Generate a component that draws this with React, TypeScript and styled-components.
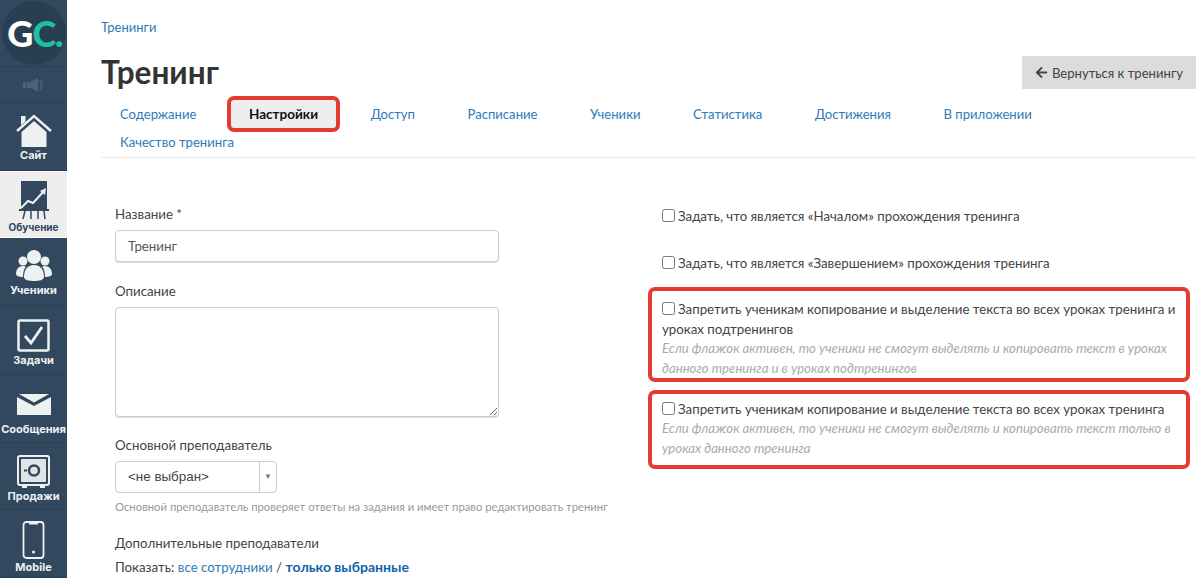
import React from "react";
import styled, { createGlobalStyle } from "styled-components";
import { FaArrowLeft } from "react-icons/fa";

const GlobalStyle = createGlobalStyle`
  html, body {
    margin: 0;
    padding: 0;
    height: 100%;
    overflow: hidden;
    background: #fff;
    font-family: Lato, "Open Sans", sans-serif;
    color: #333;
  }
`;

const Page = styled.div`
  display: flex;
  width: 1200px;
  height: 578px;
  overflow: hidden;
`;

const Sidebar = styled.nav`
  flex: 0 0 67px;
  height: 578px;
  background: #32485e;
  display: flex;
  flex-direction: column;
  overflow: hidden;
`;

const LogoCell = styled.div`
  height: 66px;
  flex: none;
  display: flex;
  align-items: center;
  justify-content: center;
  border-bottom: 1px solid #2b3f53;
`;

const LogoCircle = styled.div`
  box-sizing: border-box;
  width: 64px;
  height: 64px;
  padding-left: 3px;
  border-radius: 50%;
  background: #2a3e52;
  display: flex;
  align-items: center;
  justify-content: center;
  font: 900 36px/1 Lato, sans-serif;
  letter-spacing: -1px;
  color: #fff;
`;

const LogoAccent = styled.span`
  color: #1dbfa6;
`;

const SoundCell = styled.div`
  height: 35px;
  flex: none;
  display: flex;
  align-items: center;
  justify-content: center;
  border-bottom: 1px solid #2b3f53;
`;

const NavItem = styled.a<{ $active?: boolean; $h: number; $pad: number; $gap: number }>`
  height: ${(p) => p.$h}px;
  flex: none;
  box-sizing: border-box;
  display: flex;
  flex-direction: column;
  align-items: center;
  justify-content: flex-end;
  padding-bottom: ${(p) => p.$pad}px;
  gap: ${(p) => p.$gap}px;
  background: ${(p) => (p.$active ? "#eeeeee" : "transparent")};
  color: ${(p) => (p.$active ? "#32485e" : "#eef1f2")};
  border-bottom: 1px solid ${(p) => (p.$active ? "#fff" : "#2b3f53")};
  ${(p) => (p.$active ? "border-top: 1px solid #fff;" : "")}
  font: 700 ${(p) => (p.$active ? 10 : 11)}px/14px Inter, "Liberation Sans", sans-serif;
  white-space: nowrap;
`;

const Main = styled.main`
  flex: 1;
  min-width: 0;
  padding: 0 4px 0 34px;
`;

const TitleBlock = styled.header`
  display: flex;
  justify-content: space-between;
  align-items: flex-end;
  padding-top: 20px;
  height: 69px;
`;

const Crumb = styled.a`
  display: block;
  font-size: 13px;
  line-height: 15px;
  color: #2e7ab8;
`;

const Title = styled.h1`
  margin: 20px 0 0;
  font-size: 31.500px;
  line-height: 34px;
  font-weight: 700;
  color: #333;
`;

const BackButton = styled.a`
  width: 174px;
  height: 33px;
  background: #dcdcdc;
  display: flex;
  align-items: center;
  justify-content: center;
  gap: 4px;
  font-size: 13.100px;
  color: #444;
`;

const Tabs = styled.ul`
  list-style: none;
  margin: 11px 0 0;
  padding: 0 0 1px;
  display: flex;
  flex-wrap: wrap;
  column-gap: 14.600px;
  border-bottom: 1px solid #eaeaea;
`;

const Tab = styled.li<{ $active?: boolean }>`
  box-sizing: border-box;
  height: 28px;
  display: flex;
  align-items: center;
  padding: 0 19px;
  font-size: 13.100px;
  color: #2e7ab8;
  white-space: nowrap;
  ${(p) =>
    p.$active
      ? `
    padding: 0 18px;
    margin: -4px -3px;
    height: 36px;
    align-self: flex-start;
    background: #eee;
    border: 4px solid #e53a30;
    border-radius: 7px;
    color: #111;
    font-size: 13.500px;
    font-weight: 700;
  `
      : ""}
`;

const Columns = styled.section`
  display: grid;
  grid-template-columns: 384px 542px;
  column-gap: 149px;
  padding: 47px 0 0 14px;
`;

const Column = styled.div`
  display: flex;
  flex-direction: column;
`;

const Label = styled.label`
  display: block;
  font-size: 13.300px;
  line-height: 18px;
  color: #444;
  margin-bottom: 7px;
`;

const TextInput = styled.input`
  box-sizing: border-box;
  display: block;
  width: 384px;
  height: 32px;
  padding: 0 12px;
  border: 1px solid #ccc;
  border-radius: 4px;
  box-shadow: 0 1px 1px #ddd;
  font: 13.300px Lato, sans-serif;
  color: #555;
  margin-bottom: 20px;
`;

const TextArea = styled.textarea`
  box-sizing: border-box;
  display: block;
  width: 384px;
  height: 110px;
  border: 1px solid #ccc;
  border-radius: 4px;
  box-shadow: 0 1px 1px #ddd;
  margin-bottom: 19px;
`;

const SelectBox = styled.div`
  box-sizing: border-box;
  width: 162px;
  height: 32px;
  display: flex;
  border: 1px solid #ccc;
  border-radius: 4px;
`;

const SelectValue = styled.span`
  flex: 1;
  padding-left: 12px;
  font: 13.400px/30px "Liberation Sans", sans-serif;
  color: #444;
`;

const SelectArrow = styled.span`
  flex: 0 0 17px;
  display: flex;
  justify-content: center;
  padding-top: 10px;
  box-sizing: border-box;
  border-left: 1px solid #ccc;
  font-size: 8px;
  line-height: 8px;
  color: #777;
`;

const Hint = styled.p`
  margin: 6px 0 0;
  width: 520px;
  font-size: 11.300px;
  line-height: 15px;
  color: #999;
`;

const ExtraLabel = styled(Label)`
  margin: 20px 0 6px;
`;

const ShowRow = styled.div`
  font-size: 13.300px;
  line-height: 18px;
  color: #444;
`;

const Link = styled.a<{ $strong?: boolean }>`
  color: ${(p) => (p.$strong ? "#0f62a8" : "#2e7ab8")};
  font-weight: ${(p) => (p.$strong ? 700 : 400)};
  font-size: ${(p) => (p.$strong ? "14px" : "inherit")};
`;

const CheckRow = styled.div<{ $gap: number }>`
  padding-left: 14px;
  margin-bottom: ${(p) => p.$gap}px;
  font-size: 13.300px;
  line-height: 22px;
  color: #444;
`;

const Highlight = styled.div<{ $top: number; $bottom: number }>`
  box-sizing: border-box;
  border: 4px solid #e53a30;
  border-radius: 7px;
  padding: ${(p) => p.$top}px 8px ${(p) => p.$bottom}px 10px;
  margin-bottom: 8px;
  font-size: 13.300px;
  line-height: 20px;
  color: #444;
`;

const Box = styled.input.attrs({ type: "checkbox" })`
  width: 13px;
  height: 13px;
  margin: 0 3px 0 0;
  vertical-align: -1px;
`;

const Note = styled.div`
  font-style: italic;
  color: #aaa;
  font-size: 13.200px;
  line-height: 19.500px;
`;

const HouseIcon = () => (
  <svg width="36" height="33" viewBox="0 0 36 33">
    <path d="M5.500 18 18 7l12.500 11v15h-25z" fill="#eef1f2" />
    <path d="M5 2h4.500v5.500L5 11.500z" fill="#eef1f2" />
    <path d="M1 17 18 2l17 15" fill="none" stroke="#eef1f2" strokeWidth="2.400" />
  </svg>
);

const ChartIcon = () => (
  <svg width="30" height="38" viewBox="0 0 30 38">
    <rect x="2" y="0" width="26" height="28" fill="#32485e" />
    <path d="M2 27 9 20l5 2L25 10" fill="none" stroke="#eee" strokeWidth="2" />
    <path d="M27 7l-1 7-5-4z" fill="#eee" />
    <rect x="0" y="28" width="30" height="2" fill="#32485e" />
    <path d="M6 30 4 38M12 30v8M19 30v8M25 30l1 8" stroke="#32485e" strokeWidth="1.500" />
  </svg>
);

const PeopleIcon = () => (
  <svg width="36" height="32" viewBox="0 0 36 32">
    <g fill="#eef1f2">
      <circle cx="7" cy="11" r="4.500" />
      <circle cx="29" cy="11" r="4.500" />
      <path d="M0 24c0-5 3-8 7-8 1 0 2 .3 3 .8C8 19 7 22 7 27 3 27 0 26 0 24zM36 24c0-5-3-8-7-8-1 0-2 .3-3 .8 2 2.200 3 5.200 3 10.200 4 0 7-1 7-3z" />
      <circle cx="18" cy="7" r="7" />
      <path d="M8 27c0-8 4-12 10-12s10 4 10 12c0 3-5 4-10 4S8 30 8 27z" />
    </g>
  </svg>
);

const TaskIcon = () => (
  <svg width="33" height="33" viewBox="0 0 33 33">
    <rect x="1.500" y="1.500" width="30" height="30" rx="1.500" fill="none" stroke="#eef1f2" strokeWidth="2.500" />
    <path d="M8 17l6 7L25 8" fill="none" stroke="#eef1f2" strokeWidth="2.800" />
  </svg>
);

const MailIcon = () => (
  <svg width="34" height="21" viewBox="0 0 34 21">
    <path d="M0 3l17 9 17-9v18H0z" fill="#eef1f2" />
    <path d="M2 0h30L17 8.500z" fill="#eef1f2" />
  </svg>
);

const SafeIcon = () => (
  <svg width="33" height="33" viewBox="0 0 33 33">
    <rect x="1" y="1" width="31" height="29" rx="2" fill="none" stroke="#eef1f2" strokeWidth="2" />
    <rect x="4" y="4" width="25" height="23" rx="1" fill="#dfe4e6" />
    <circle cx="17" cy="15.500" r="5" fill="none" stroke="#32485e" strokeWidth="2.500" />
    <path d="M7 15.500h3" stroke="#32485e" strokeWidth="2" />
    <path d="M5 30h5v3H5zM23 30h5v3h-5z" fill="#eef1f2" />
  </svg>
);

const PhoneIcon = () => (
  <svg width="23" height="38" viewBox="0 0 23 38">
    <rect x="1.500" y="1" width="20" height="36" rx="3" fill="none" stroke="#eef1f2" strokeWidth="1.800" />
    <path d="M7 1h9v2.500H7z" fill="#eef1f2" />
    <circle cx="11.500" cy="31" r="1.500" fill="#eef1f2" />
  </svg>
);

const SoundIcon = () => (
  <svg width="22" height="16" viewBox="0 0 22 16" fill="#4c6376">
    <rect x="0" y="5" width="3" height="6" />
    <path d="M4 5h4l7-4v14l-7-4H4z" />
    <path d="M17 3c2 3 2 7 0 10" fill="none" stroke="#4c6376" strokeWidth="1.500" />
  </svg>
);

const navItems = [
  { label: "Сайт", icon: <HouseIcon />, h: 68, pad: 8, gap: 1 },
  { label: "Обучение", icon: <ChartIcon />, h: 67, pad: 3, gap: 1 },
  { label: "Ученики", icon: <PeopleIcon />, h: 68, pad: 8, gap: 1 },
  { label: "Задачи", icon: <TaskIcon />, h: 69, pad: 7, gap: 1 },
  { label: "Сообщения", icon: <MailIcon />, h: 68, pad: 6, gap: 7 },
  { label: "Продажи", icon: <SafeIcon />, h: 67, pad: 6, gap: 1 },
  { label: "Mobile", icon: <PhoneIcon />, h: 68, pad: 3, gap: 1 },
];

const tabs = [
  "Содержание",
  "Настройки",
  "Доступ",
  "Расписание",
  "Ученики",
  "Статистика",
  "Достижения",
  "В приложении",
  "Качество тренинга",
];

const App: React.FC = () => {
  return (
    <Page>
      <GlobalStyle />
      <Sidebar>
        <LogoCell>
          <LogoCircle>
            G<LogoAccent>C.</LogoAccent>
          </LogoCircle>
        </LogoCell>
        <SoundCell>
          <SoundIcon />
        </SoundCell>
        {navItems.map((item) => (
          <NavItem key={item.label} $active={item.label === "Обучение"} $h={item.h} $pad={item.pad} $gap={item.gap}>
            {item.icon}
            {item.label}
          </NavItem>
        ))}
      </Sidebar>
      <Main>
        <TitleBlock>
          <div>
            <Crumb>Тренинги</Crumb>
            <Title>Тренинг</Title>
          </div>
          <BackButton>
            <FaArrowLeft size={13} />
            Вернуться к тренингу
          </BackButton>
        </TitleBlock>
        <Tabs>
          {tabs.map((tab) => (
            <Tab key={tab} $active={tab === "Настройки"}>
              {tab}
            </Tab>
          ))}
        </Tabs>
        <Columns>
          <Column>
            <Label>Название *</Label>
            <TextInput defaultValue="Тренинг" />
            <Label>Описание</Label>
            <TextArea />
            <Label>Основной преподаватель</Label>
            <SelectBox>
              <SelectValue>&lt;не выбран&gt;</SelectValue>
              <SelectArrow>▼</SelectArrow>
            </SelectBox>
            <Hint>Основной преподаватель проверяет ответы на задания и имеет право редактировать тренинг</Hint>
            <ExtraLabel>Дополнительные преподаватели</ExtraLabel>
            <ShowRow>
              Показать: <Link>все сотрудники</Link> / <Link $strong>только выбранные</Link>
            </ShowRow>
          </Column>
          <Column>
            <CheckRow $gap={25}>
              <Box />Задать, что является «Началом» прохождения тренинга
            </CheckRow>
            <CheckRow $gap={13}>
              <Box />Задать, что является «Завершением» прохождения тренинга
            </CheckRow>
            <Highlight $top={8} $bottom={0}>
              <Box />Запретить ученикам копирование и выделение текста во всех уроках тренинга и уроках подтренингов
              <Note>Если флажок активен, то ученики не смогут выделять и копировать текст в уроках данного тренинга и в уроках подтренингов</Note>
            </Highlight>
            <Highlight $top={5} $bottom={7}>
              <Box />Запретить ученикам копирование и выделение текста во всех уроках тренинга
              <Note>Если флажок активен, то ученики не смогут выделять и копировать текст только в уроках данного тренинга</Note>
            </Highlight>
          </Column>
        </Columns>
      </Main>
    </Page>
  );
};

export default App;
